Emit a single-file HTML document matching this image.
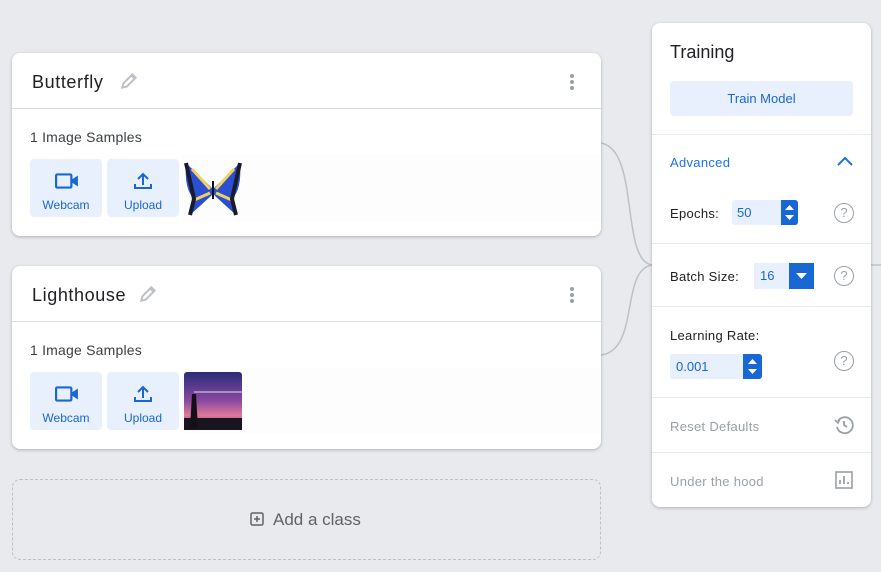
<!DOCTYPE html>
<html><head><style>
*{box-sizing:border-box;margin:0;padding:0}
body{width:881px;height:572px;background:#e8eaed;font-family:"Liberation Sans",sans-serif;position:relative;overflow:hidden;color:#202124}
.card{position:absolute;left:12px;width:589px;height:183px;background:#fff;border-radius:8px;box-shadow:0 1px 3px rgba(0,0,0,.25)}
.hd{height:56px;border-bottom:1px solid #dadce0;position:relative}
.hd .t{position:absolute;left:20px;top:19px;font-size:18px;letter-spacing:.6px}
.dots{position:absolute;right:27px;top:21px;width:4px}
.dots i{display:block;width:4px;height:4px;border-radius:2px;background:#9aa0a6;margin-bottom:2px}
.ns{position:absolute;left:18px;top:76px;font-size:14px;color:#3c4043;letter-spacing:.2px}
.btn{position:absolute;top:106px;width:72px;height:58px;background:#e8f0fe;border-radius:4px;color:#1967d2;font-size:12px;text-align:center}
.btn span{position:absolute;left:0;right:0;top:39px}
.btn svg{position:absolute;left:25px;top:12px}
.strip{position:absolute;left:170px;top:102px;width:419px;height:66px;background:#fdfdfe}
.thumb{position:absolute;left:172px;top:106px;width:58px;height:58px}
.panel{position:absolute;left:652px;top:23px;width:219px;height:484px;background:#fff;border-radius:8px;box-shadow:0 1px 3px rgba(0,0,0,.25)}
.hr{position:absolute;left:0;right:0;height:1px;background:#e8eaed}
.lbl{position:absolute;left:18px;font-size:13px;color:#202124;letter-spacing:.3px}
.grey{color:#9aa0a6;font-size:13px;position:absolute;left:18px;letter-spacing:.3px}
.q{position:absolute;left:182px;width:20px;height:20px;border:1.5px solid #9aa0a6;border-radius:50%;color:#9aa0a6;font-size:13px;text-align:center;line-height:17px}
.inp{position:absolute;background:#e8f0fe;color:#1967d2;font-size:13px;border-radius:3px}
</style></head><body>
<svg style="position:absolute;left:0;top:0" width="881" height="572"><path d="M601 143 C640 150,620 260,652 265 M601 355 C640 350,620 270,652 265" stroke="#bdc1c6" stroke-width="1.5" fill="none"/><line x1="871" y1="265" x2="881" y2="265" stroke="#bdc1c6" stroke-width="1.5"/></svg>

<div class="card" style="top:53px">
 <div class="hd"><div class="t">Butterfly</div>
 <svg style="position:absolute;left:107px;top:18px" width="20" height="20" viewBox="0 0 18 18"><path d="M3 15 L4 11 L12 3 L15 6 L7 14 Z M11 4 L14 7" stroke="#bdc1c6" stroke-width="1.8" fill="none"/></svg>
 <div class="dots"><i></i><i></i><i></i></div></div>
 <div class="ns">1 Image Samples</div>
 <div class="strip"></div>
 <div class="btn" style="left:18px"><svg width="24" height="20" viewBox="0 0 22 18"><rect x="1" y="3" width="14" height="12" rx="1" stroke="#1967d2" stroke-width="2" fill="none"/><path d="M15 8 L21 4 V14 L15 10Z" fill="#1967d2"/></svg><span>Webcam</span></div>
 <div class="btn" style="left:95px"><svg width="22" height="20" viewBox="0 0 22 20"><path d="M11 14 V3 M6 8 L11 3 L16 8 M3 13 V17 H19 V13" stroke="#1967d2" stroke-width="2" fill="none"/></svg><span>Upload</span></div>
 <svg class="thumb" viewBox="0 0 58 58"><path d="M29 30 L2 4 Q0 30 10 40 L6 56 L28 36Z" fill="#2a4fd0"/><path d="M29 30 L56 4 Q58 30 48 40 L52 56 L30 36Z" fill="#2a4fd0"/><path d="M8 10 L26 30 M50 10 L32 30 M8 42 L26 34 M50 42 L32 34" stroke="#f0d060" stroke-width="3"/><path d="M2 4 L10 40 L6 56 M56 4 L48 40 L52 56" stroke="#1a1a2a" stroke-width="4" fill="none"/><rect x="28" y="22" width="2" height="18" fill="#111"/></svg>
</div>

<div class="card" style="top:266px">
 <div class="hd"><div class="t">Lighthouse</div>
 <svg style="position:absolute;left:126px;top:18px" width="20" height="20" viewBox="0 0 18 18"><path d="M3 15 L4 11 L12 3 L15 6 L7 14 Z M11 4 L14 7" stroke="#bdc1c6" stroke-width="1.8" fill="none"/></svg>
 <div class="dots"><i></i><i></i><i></i></div></div>
 <div class="ns">1 Image Samples</div>
 <div class="strip"></div>
 <div class="btn" style="left:18px"><svg width="24" height="20" viewBox="0 0 22 18"><rect x="1" y="3" width="14" height="12" rx="1" stroke="#1967d2" stroke-width="2" fill="none"/><path d="M15 8 L21 4 V14 L15 10Z" fill="#1967d2"/></svg><span>Webcam</span></div>
 <div class="btn" style="left:95px"><svg width="22" height="20" viewBox="0 0 22 20"><path d="M11 14 V3 M6 8 L11 3 L16 8 M3 13 V17 H19 V13" stroke="#1967d2" stroke-width="2" fill="none"/></svg><span>Upload</span></div>
 <svg class="thumb" viewBox="0 0 58 58"><defs><linearGradient id="g" x1="0" y1="0" x2="0" y2="1"><stop offset="0" stop-color="#2a2a7a"/><stop offset=".5" stop-color="#8a4aa0"/><stop offset=".75" stop-color="#e07a9a"/><stop offset="1" stop-color="#3a2a4a"/></linearGradient></defs><rect width="58" height="58" rx="3" fill="url(#g)"/><rect x="0" y="46" width="58" height="12" fill="#1a1420"/><path d="M6 56 L8 22 L12 22 L14 56Z" fill="#151018"/><line x1="10" y1="20" x2="58" y2="20" stroke="#dde" stroke-width="1"/></svg>
</div>

<div style="position:absolute;left:12px;top:479px;width:589px;height:81px;border:1.5px dashed #bdc1c6;border-radius:8px"></div>
<svg style="position:absolute;left:250px;top:512px" width="14" height="14" viewBox="0 0 14 14"><rect x="1" y="1" width="12" height="12" rx="1.5" stroke="#5f6368" stroke-width="1.5" fill="none"/><path d="M7 4 V10 M4 7 H10" stroke="#5f6368" stroke-width="1.5"/></svg>
<div style="position:absolute;left:273px;top:510px;font-size:17px;color:#5f6368">Add a class</div>

<div class="panel">
 <div style="position:absolute;left:18px;top:19px;font-size:18px">Training</div>
 <div style="position:absolute;left:18px;top:58px;width:183px;height:35px;background:#e8f0fe;border-radius:4px;color:#1967d2;font-size:13px;text-align:center;line-height:36px">Train Model</div>
 <div class="hr" style="top:111px"></div>
 <div style="position:absolute;left:18px;top:132px;font-size:13px;color:#1a73e8;letter-spacing:.3px">Advanced</div>
 <svg style="position:absolute;left:185px;top:133px" width="16" height="10" viewBox="0 0 16 10"><path d="M1 9 L8 2 L15 9" stroke="#1a73e8" stroke-width="2" fill="none"/></svg>
 <div class="lbl" style="top:183px">Epochs:</div>
 <div class="inp" style="left:80px;top:177px;width:66px;height:25px;line-height:25px;padding-left:5px">50</div>
 <div style="position:absolute;left:129px;top:177px;width:17px;height:25px;background:#1967d2;border-radius:0 3px 3px 0"><svg width="17" height="25"><path d="M4 10 L8.5 5 L13 10Z M4 15 L8.5 20 L13 15Z" fill="#fff"/></svg></div>
 <div class="q" style="top:180px">?</div>
 <div class="hr" style="top:220px"></div>
 <div class="lbl" style="top:246px">Batch Size:</div>
 <div class="inp" style="left:102px;top:240px;width:60px;height:26px;line-height:26px;padding-left:6px;border-radius:0">16</div>
 <div style="position:absolute;left:137px;top:240px;width:25px;height:26px;background:#1967d2"><svg width="25" height="26"><path d="M7 10 L18 10 L12.5 16Z" fill="#fff"/></svg></div>
 <div class="q" style="top:243px">?</div>
 <div class="hr" style="top:283px"></div>
 <div class="lbl" style="top:305px">Learning Rate:</div>
 <div class="inp" style="left:18px;top:331px;width:92px;height:25px;line-height:25px;padding-left:6px">0.001</div>
 <div style="position:absolute;left:91px;top:331px;width:19px;height:25px;background:#1967d2;border-radius:0 3px 3px 0"><svg width="19" height="25"><path d="M5 10 L9.5 5 L14 10Z M5 15 L9.5 20 L14 15Z" fill="#fff"/></svg></div>
 <div class="q" style="top:328px">?</div>
 <div class="hr" style="top:374px"></div>
 <div class="grey" style="top:396px">Reset Defaults</div>
 <svg style="position:absolute;left:182px;top:392px" width="20" height="20" viewBox="0 0 20 20"><path d="M4 6 A8 8 0 1 1 3 12" stroke="#9aa0a6" stroke-width="1.8" fill="none"/><path d="M1 5 L4 8 L6 4" stroke="#9aa0a6" stroke-width="1.6" fill="none"/><path d="M10 6 V10 L13 12" stroke="#9aa0a6" stroke-width="1.8" fill="none"/></svg>
 <div class="hr" style="top:429px"></div>
 <div class="grey" style="top:451px">Under the hood</div>
 <svg style="position:absolute;left:183px;top:448px" width="18" height="18" viewBox="0 0 18 18"><rect x="1" y="1" width="16" height="16" stroke="#9aa0a6" stroke-width="1.6" fill="none"/><path d="M5 13 V9 M9 13 V5 M13 13 V11" stroke="#9aa0a6" stroke-width="1.8"/></svg>
</div>
</body></html>
